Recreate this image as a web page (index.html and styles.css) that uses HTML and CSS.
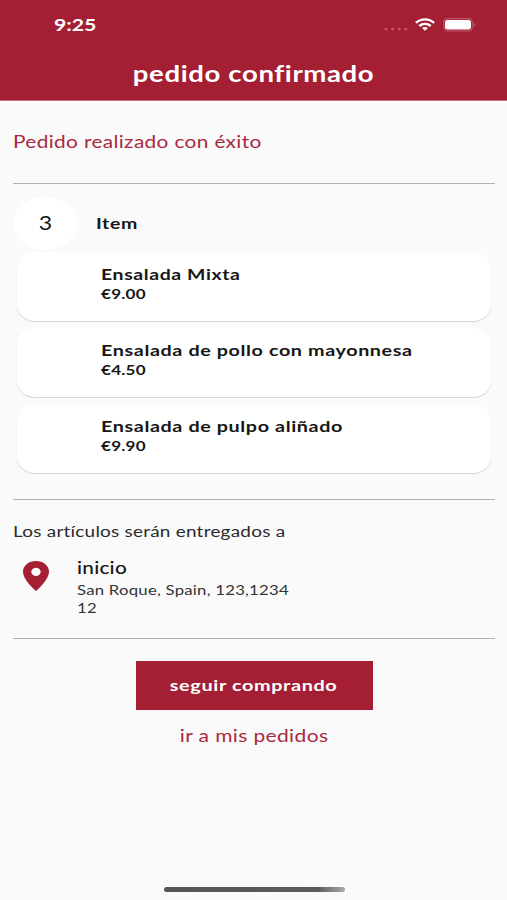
FILE: index.html
```html
<!DOCTYPE html>
<html lang="es">
<head>
<meta charset="utf-8">
<title>Pedido confirmado</title>
<link rel="stylesheet" href="styles.css">
</head>
<body>
<header class="header">
  <div class="status">
    <span class="text time">9:25</span>
    <div class="indicators">
      <svg class="dots" width="24" height="4" viewBox="0 0 24 4"><g fill="#bd5468"><circle cx="2" cy="2" r="1.6"/><circle cx="8.6" cy="2" r="1.6"/><circle cx="15.2" cy="2" r="1.6"/><circle cx="21.8" cy="2" r="1.6"/></g></svg>
      <svg class="wifi" width="20" height="13" viewBox="0 0 20 13"><g fill="none" stroke="#fff" stroke-width="2.4"><path d="M.9 4.9C6 .2 14 .2 19.1 4.9"/><path d="M4.3 8C7.4 5.1 12.6 5.1 15.7 8"/></g><path fill="#fff" d="M7 10C8.7 8.5 11.3 8.5 13 10L10 12.8Z"/></svg>
      <svg class="battery" width="34" height="14" viewBox="0 0 34 14"><rect x=".7" y=".7" width="28.6" height="12.2" rx="3.6" fill="none" stroke="#bd5468" stroke-width="1.2"/><rect x="2" y="2" width="26" height="9.6" rx="2.4" fill="#fff"/><path d="M30.8 4.8Q34 6.8 30.8 8.8Z" fill="#bd5468"/></svg>
    </div>
  </div>
  <h1 class="title"><span class="text">pedido confirmado</span></h1>
</header>
<main class="content">
  <p class="success"><span class="text">Pedido realizado con éxito</span></p>
  <section class="order">
    <div class="summary">
      <span class="count"><span class="text">3</span></span>
      <span class="text item-label">Item</span>
    </div>
    <ul class="cards">
      <li class="card"><span class="text name short">Ensalada Mixta</span><span class="text price">€9.00</span></li>
      <li class="card"><span class="text name">Ensalada de pollo con mayonnesa</span><span class="text price">€4.50</span></li>
      <li class="card"><span class="text name">Ensalada de pulpo aliñado</span><span class="text price">€9.90</span></li>
    </ul>
  </section>
  <section class="delivery">
    <p class="delivery-label"><span class="text">Los artículos serán entregados a</span></p>
    <div class="address">
      <svg class="pin" width="26" height="30" viewBox="0 0 26 30"><path fill="#a41e34" fill-rule="evenodd" d="M13 0C5.8 0 0 4.7 0 10.7C0 18 9 26.3 13 30C17 26.3 26 18 26 10.7C26 4.7 20.2 0 13 0ZM13 6.7A4.7 4.1 0 1 1 13 14.9A4.7 4.1 0 1 1 13 6.7Z"/></svg>
      <div class="lines">
        <span class="text place">inicio</span>
        <span class="text line">San Roque, Spain, 123,1234</span>
        <span class="text line">12</span>
      </div>
    </div>
  </section>
  <div class="actions">
    <button class="primary"><span class="text">seguir comprando</span></button>
    <a class="link"><span class="text">ir a mis pedidos</span></a>
  </div>
</main>
<div class="home-bar"></div>
</body>
</html>
```
FILE: styles.css
```css
* { box-sizing: border-box; margin: 0; padding: 0; }
body {
  height: 900px;
  display: flex;
  flex-direction: column;
  background: #fafafa;
  color: #161616;
  font-family: Lato, "Noto Sans", sans-serif;
  overflow: hidden;
}
/* Wide letterforms */
.text {
  display: block;
  width: max-content;
  white-space: nowrap;
  transform: scaleX(1.22);
  transform-origin: left center;
}
.header {
  height: 101px;
  background: #a41e34;
  border-bottom: 1px solid #c4707c;
  color: #fff;
}
.status {
  height: 49px;
  padding: 0 30px 0 54px;
  display: flex;
  justify-content: space-between;
  align-items: center;
}
.time { font-size: 17px; font-weight: 700; line-height: 20px; transform: scaleX(1.25); }
.indicators { display: flex; align-items: center; }
.dots { margin: 9px 7px 0 0; }
.wifi { margin-right: 8px; }
.title {
  display: flex;
  justify-content: center;
  font-size: 22.5px;
  line-height: 30px;
  padding: 10px 0 0 1px;
  letter-spacing: .5px;
}
.title .text { transform: scaleX(1.225); transform-origin: center; }
.content { padding: 0 12px 0 13px; }
.success {
  height: 83px;
  padding-top: 29px;
  border-bottom: 1px solid #b0b0b0;
  color: #a92940;
  font-size: 17.5px;
  line-height: 24px;
  letter-spacing: .3px;
}
.success .text { transform: scaleX(1.19); }
.order { height: 316px; padding-top: 13px; border-bottom: 1px solid #b0b0b0; }
.summary { display: flex; align-items: center; gap: 19px; height: 53px; }
.count {
  width: 64px;
  height: 53px;
  display: flex;
  align-items: center;
  justify-content: center;
  border-radius: 50%;
  background: #fff;
  font-size: 18.5px;
}
.count .text { padding-bottom: 1px; transform: scaleX(1.25); transform-origin: center; }
.item-label { padding-bottom: 2px; font-size: 16px; font-weight: 700; letter-spacing: .5px; }
.cards { list-style: none; padding: 2px 4px 0; display: flex; flex-direction: column; gap: 7px; }
.card {
  height: 69px;
  padding: 11px 0 0 83.5px;
  border-radius: 18px / 16px;
  background: #fff;
  box-shadow: 0 1px 1px rgba(0, 0, 0, .15);
}
.name { font-size: 16px; font-weight: 700; line-height: 21px; letter-spacing: .5px; transform: scaleX(1.233); }
.name.short { transform: scaleX(1.215); }
.price { font-size: 14px; font-weight: 700; line-height: 20px; letter-spacing: .2px; }
.delivery { height: 139px; padding-top: 21px; border-bottom: 1px solid #b0b0b0; }
.delivery-label { font-size: 15.5px; line-height: 20px; letter-spacing: .2px; color: #2a2a2a; }
.address { display: flex; padding: 16px 0 0 10px; }
.pin { margin: 4px 28px 0 0; }
.place { margin-bottom: 2px; font-size: 17px; font-weight: 500; line-height: 22px; letter-spacing: .2px; }
.line { font-size: 14px; line-height: 18px; letter-spacing: .2px; color: #333; transform: scaleX(1.195); }
.actions { display: flex; flex-direction: column; align-items: center; padding-top: 22px; }
.primary {
  width: 237px;
  height: 49px;
  padding-bottom: 2px;
  display: flex;
  align-items: center;
  justify-content: center;
  border: 0;
  background: #a41e34;
  color: #fff;
  font: 700 16px Lato, sans-serif;
  letter-spacing: .5px;
}
.primary .text { transform: scaleX(1.24); transform-origin: center; }
.link { margin-top: 14px; font-size: 17px; line-height: 24px; letter-spacing: .3px; color: #a92940; }
.link .text { transform: scaleX(1.235); transform-origin: center; }
.home-bar {
  width: 181px;
  height: 5px;
  margin: auto auto 8px 164px;
  border-radius: 3px;
  background: linear-gradient(90deg, #555 0%, #5c5c5c 85%, #aaa 100%);
}
```
